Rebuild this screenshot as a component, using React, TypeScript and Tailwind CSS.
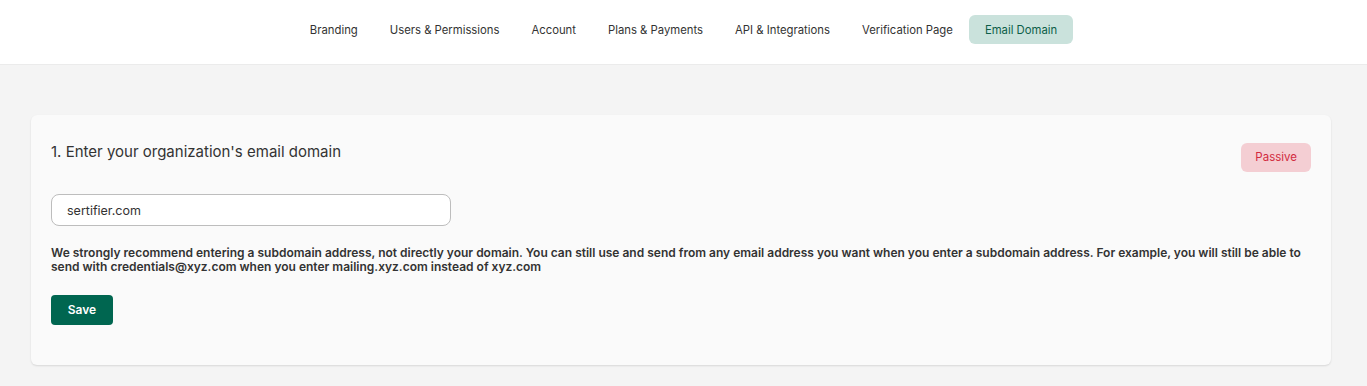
import { useState } from "react";

const tabs = [
  "Branding",
  "Users & Permissions",
  "Account",
  "Plans & Payments",
  "API & Integrations",
  "Verification Page",
  "Email Domain",
];

export default function App() {
  const [domain, setDomain] = useState("sertifier.com");
  const active = "Email Domain";

  return (
    <div className="min-h-screen bg-[#f4f4f4] font-['Inter',sans-serif] text-[#333]">
      <header className="h-[65px] bg-white border-b border-[#ebebeb] flex justify-center pt-[15px]">
        <nav className="flex h-[29px]">
          {tabs.map((t) => (
            <a
              key={t}
              href="#"
              className={
                t === active
                  ? "px-4 pt-[2px] flex items-center rounded-md bg-[#cae2dc] text-[#0d5e49] text-[11.3px]"
                  : "px-4 pt-[2px] flex items-center rounded-md text-[#333] text-[11.3px]"
              }
            >
              {t}
            </a>
          ))}
        </nav>
      </header>

      <main className="pl-[31px] pr-[36px] pt-[50px]">
        <section className="bg-[#fafafa] rounded-md shadow-[0_1px_2px_rgba(0,0,0,0.12)] px-5 pt-[28px] pb-[40px]">
          <div className="flex items-start justify-between">
            <h2 className="text-[15px] text-[#333] leading-4 mt-[1px]">
              1. Enter your organization's email domain
            </h2>
            <span className="h-[29px] px-[14px] flex items-center rounded-md bg-[#f4ced3] text-[#d22a3e] text-[11.5px]">
              Passive
            </span>
          </div>

          <input
            value={domain}
            onChange={(e) => setDomain(e.target.value)}
            className="mt-[22px] block w-[400px] h-[32px] rounded-lg border border-[#bdbdbd] bg-white px-[15px] text-[12.5px] text-[#333] outline-none"
          />

          <p className="mt-[20px] text-[12px] leading-[14px] font-semibold text-[#333] pr-[10px]">
            We strongly recommend entering a subdomain address, not directly your domain. You can still use and send from any email address you want when you enter a subdomain address. For example, you will still be able to send with credentials@xyz.com when you enter mailing.xyz.com instead of xyz.com
          </p>

          <button className="mt-[21px] h-[30px] w-[62px] rounded bg-[#006650] text-white text-[12px] font-semibold">
            Save
          </button>
        </section>
      </main>
    </div>
  );
}
